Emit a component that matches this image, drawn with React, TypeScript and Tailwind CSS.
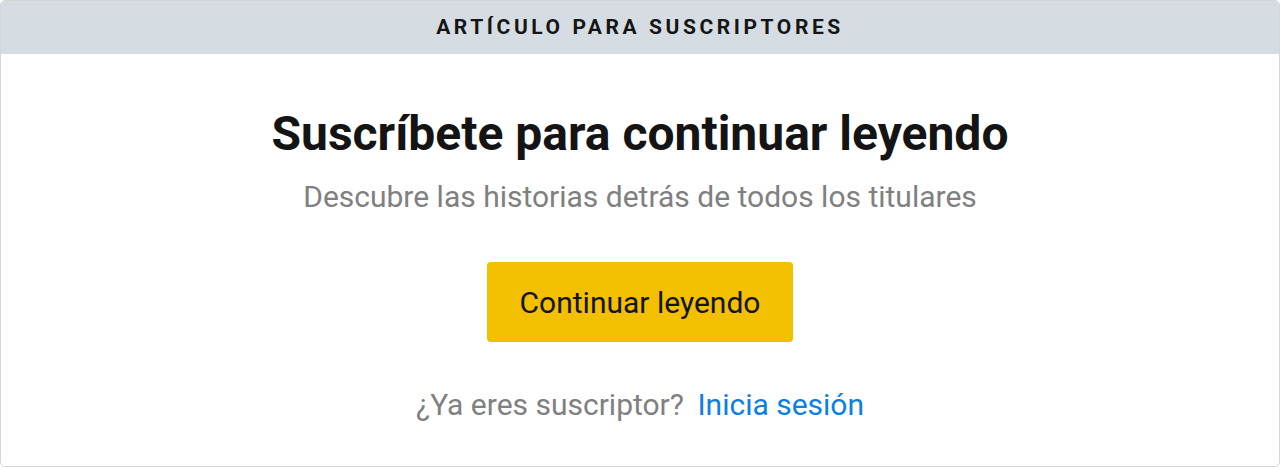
export default function App() {
  return (
    <div className="w-[1280px] h-[468px] bg-white" style={{ fontFamily: "Roboto, 'Liberation Sans', sans-serif" }}>
      <div className="h-[467px] border border-[#d6d6d6] rounded-[5px] overflow-hidden flex flex-col">
        <div className="h-[53px] bg-[#d5dde3] flex items-center justify-center">
          <span className="text-[21px] font-bold tracking-[0.17em] text-[#151515]">ARTÍCULO PARA SUSCRIPTORES</span>
        </div>
        <div className="flex flex-col items-center pt-[52px]">
          <h1 className="text-[48px] leading-[56px] font-bold text-[#141414]">Suscríbete para continuar leyendo</h1>
          <p className="mt-[17px] text-[30px] leading-[36px] text-[#808080]">Descubre las historias detrás de todos los titulares</p>
          <button className="mt-[47px] w-[306px] h-[80px] rounded-[4px] bg-[#f2c000] text-[30px] text-[#141414]">
            Continuar leyendo
          </button>
          <p className="mt-[45px] text-[30px] leading-[36px] text-[#808080]">
            ¿Ya eres suscriptor?{" "}
            <a href="#" className="ml-[6px] text-[#0a7fe6]">Inicia sesión</a>
          </p>
        </div>
      </div>
    </div>
  );
}
